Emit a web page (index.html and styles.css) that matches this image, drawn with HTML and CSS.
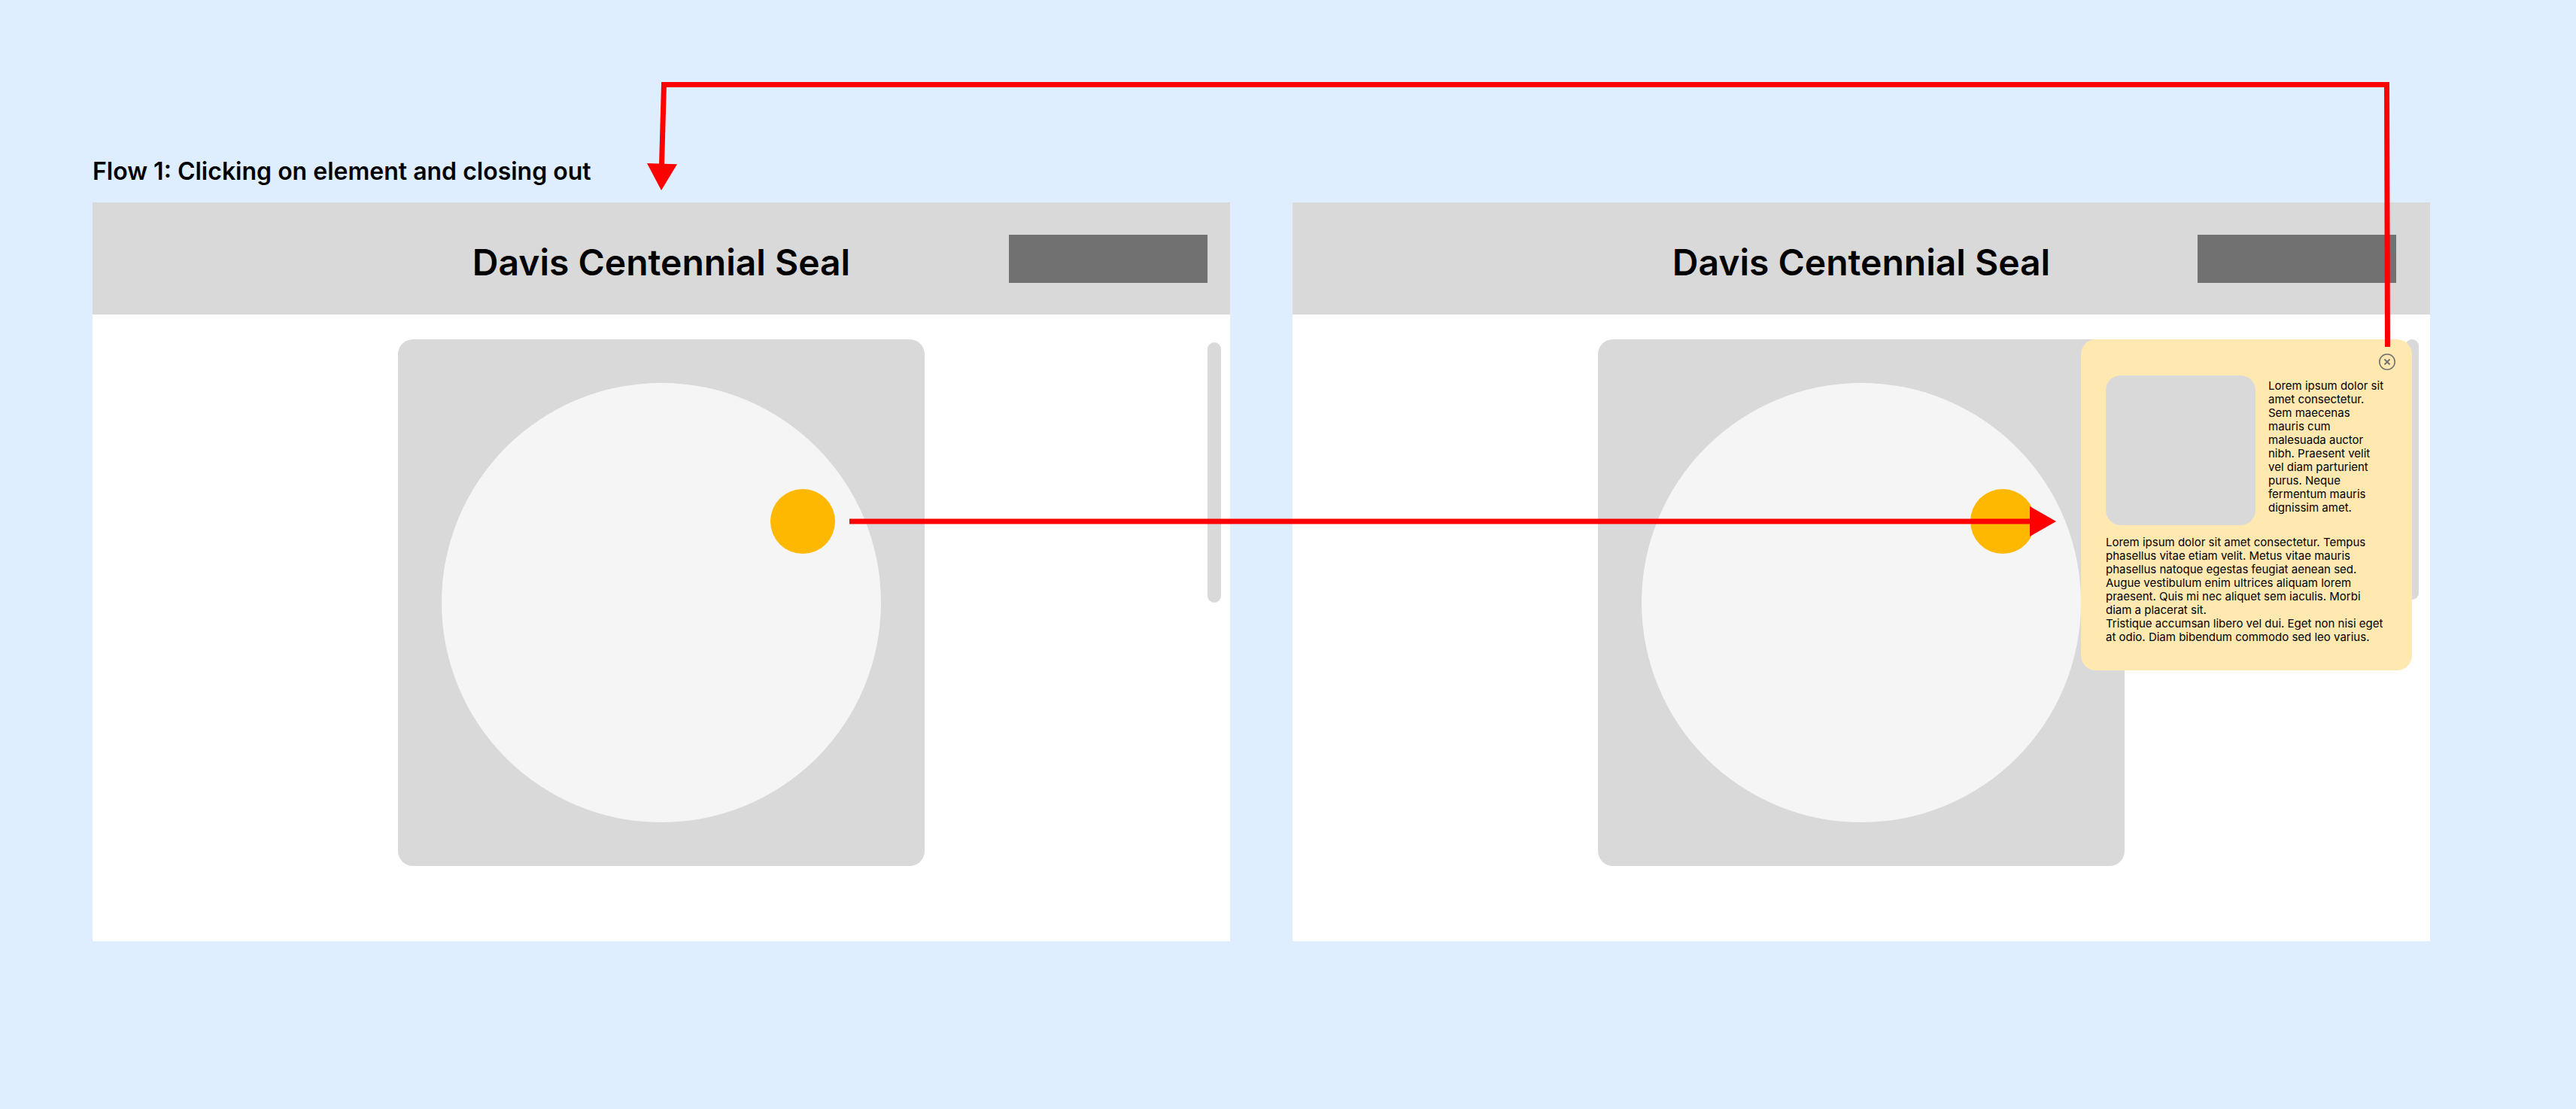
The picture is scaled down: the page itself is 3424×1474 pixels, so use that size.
FILE: index.html
```html
<!DOCTYPE html>
<html lang="en">
<head>
  <meta charset="utf-8">
  <meta name="viewport" content="width=device-width, initial-scale=1">
  <title>Davis Centennial Seal</title>
  <link rel="stylesheet" href="styles.css">
</head>
<body>
  <main class="board">
    <h1 class="flow-title">Flow 1: Clicking on element and closing out</h1>
    <div class="frames">
      <section class="frame">
        <header class="frame-header">
          <h2 class="frame-title">Davis Centennial Seal</h2>
          <button class="header-button" type="button" aria-label="Menu"></button>
        </header>
        <div class="frame-body">
          <div class="seal">
            <div class="seal-disc">
              <button class="hotspot" type="button" aria-label="Seal element"></button>
            </div>
          </div>
          <div class="scroll-thumb"></div>
        </div>
      </section>

      <section class="frame frame-open">
        <header class="frame-header">
          <h2 class="frame-title">Davis Centennial Seal</h2>
          <button class="header-button" type="button" aria-label="Menu"></button>
        </header>
        <div class="frame-body">
          <div class="seal">
            <div class="seal-disc">
              <button class="hotspot" type="button" aria-label="Seal element"></button>
            </div>
          </div>
          <div class="scroll-thumb"></div>
          <article class="popup">
            <button class="popup-close" type="button" aria-label="Close">
              <svg viewBox="0 0 22 22" width="22" height="22" fill="none" stroke="#717171">
                <circle cx="11" cy="11" r="10.2" stroke-width="1.6"/>
                <path d="M7.5 7.5l7 7M14.5 7.5l-7 7" stroke-width="1.9"/>
              </svg>
            </button>
            <div class="popup-top">
              <div class="popup-image"></div>
              <p class="popup-intro">Lorem ipsum dolor sit amet consectetur. Sem maecenas mauris cum malesuada auctor nibh. Praesent velit vel diam parturient purus. Neque fermentum mauris dignissim amet.</p>
            </div>
            <p class="popup-text">Lorem ipsum dolor sit amet consectetur. Tempus phasellus vitae etiam velit. Metus vitae mauris phasellus natoque egestas feugiat aenean sed. Augue vestibulum enim ultrices aliquam lorem praesent. Quis mi nec aliquet sem iaculis. Morbi diam a placerat sit.</p>
            <p class="popup-text">Tristique accumsan libero vel dui. Eget non nisi eget at odio. Diam bibendum commodo sed leo varius.</p>
          </article>
        </div>
      </section>
    </div>

    <!-- Flow connectors between the frames -->
    <svg class="connectors" viewBox="0 0 3424 1474" preserveAspectRatio="xMidYMin meet" aria-hidden="true">
      <g fill="none" stroke="#f00" stroke-width="7">
        <path d="M1129 693H2700"/>
        <path d="M3173.5 461L3172.5 112.500H882.500L879.500 219"/>
      </g>
      <g fill="#f00">
        <path d="M2698 673v40l35-20z"/>
        <path d="M860 217l40 1.200L879 253z"/>
      </g>
    </svg>
  </main>
</body>
</html>
```
FILE: styles.css
```css
* {
  box-sizing: border-box;
}

body {
  margin: 0;
  min-height: 100vh;
  background: #deeeff;
  color: #000;
  font-family: Inter, "Liberation Sans", sans-serif;
}

h1,
h2,
p {
  margin: 0;
}

button {
  padding: 0;
  border: 0;
  cursor: pointer;
}

.board {
  position: relative;
  min-height: 100vh;
  padding: 208px 194px 0 123px;
}

.flow-title {
  margin-bottom: 21px;
  font-size: 32px;
  font-weight: 600;
  line-height: 40px;
}

.frames {
  display: grid;
  grid-template-columns: 1fr 1fr;
  gap: 83px;
}

.frame {
  background: #fff;
}

.frame-header {
  display: grid;
  grid-template-columns: 1fr auto 1fr;
  align-items: center;
  padding: 40px 30px;
  background: #d9d9d9;
}

.frame-open .frame-header {
  padding: 40px 45px;
}

.frame-title {
  grid-column: 2;
  padding-top: 11px;
  font-size: 48px;
  font-weight: 600;
  line-height: 58px;
}

.header-button {
  justify-self: end;
  width: 264px;
  height: 64px;
  background: #717171;
}

.frame-body {
  position: relative;
  padding: 33px 0 100px;
}

.seal {
  width: 700px;
  margin: 0 auto;
  padding: 58px;
  border-radius: 20px;
  background: #d9d9d9;
}

.seal-disc {
  position: relative;
  aspect-ratio: 1;
  border-radius: 50%;
  background: #f5f5f5;
}

.hotspot {
  position: absolute;
  top: 141px;
  left: 437px;
  width: 86px;
  height: 86px;
  border-radius: 50%;
  background: #ffb800;
}

.scroll-thumb {
  position: absolute;
  top: 37px;
  right: 12px;
  width: 18px;
  height: 346px;
  border-radius: 9px;
  background: #d9d9d9;
}

.frame-open .scroll-thumb {
  top: 33px;
  right: 15px;
}

.popup {
  position: absolute;
  top: 33px;
  right: 24px;
  width: 440px;
  padding: 48px 36px 35px 33px;
  border-radius: 20px;
  background: #ffe9b0;
  font-size: 15px;
  line-height: 18px;
}

.popup-close {
  position: absolute;
  top: 19px;
  right: 22px;
  width: 22px;
  height: 22px;
  background: none;
}

.popup-close svg {
  display: block;
}

.popup-top {
  display: flex;
  gap: 17px;
  margin-bottom: 14px;
}

.popup-image {
  flex: none;
  width: 199px;
  height: 199px;
  border-radius: 20px;
  background: #d9d9d9;
}

.popup-intro {
  padding-top: 5px;
}

.connectors {
  position: absolute;
  top: 0;
  left: 0;
  width: 100%;
  height: 100%;
  pointer-events: none;
}
```
